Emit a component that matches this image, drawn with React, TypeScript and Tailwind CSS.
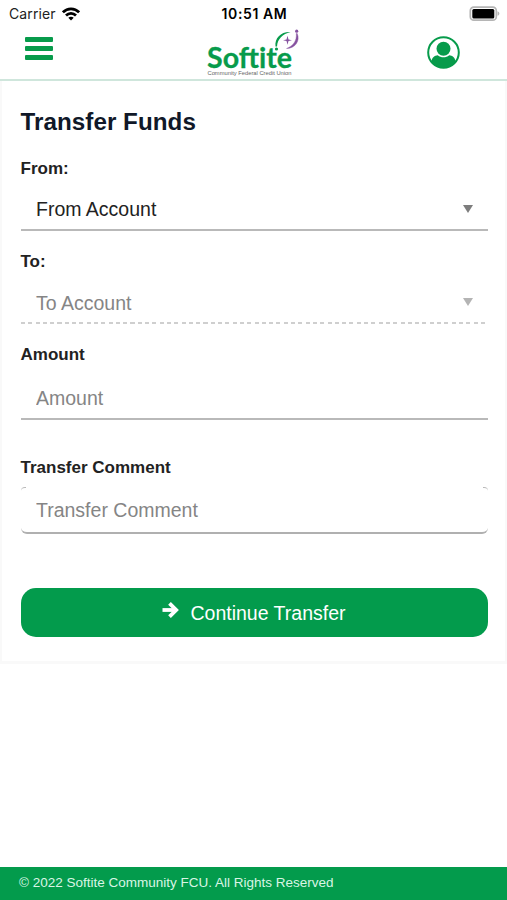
import React, { useState } from 'react';

const StatusBar = () => (
  <div className="grid grid-cols-3 items-center h-7 pb-px pl-[9px] pr-[7px] text-black font-['Inter',sans-serif]">
    <div className="flex items-center gap-[6px]">
      <span className="text-[14px] tracking-[0.1px] text-[#222]">Carrier</span>
      <svg width="18" height="14" viewBox="0 0 18 14" fill="none" stroke="#000" strokeWidth="2.7">
        <path d="M0.9 5.3C5.4 0.6 12.6 0.6 17.1 5.3" />
        <path d="M4 8.5C6.8 5.6 11.2 5.6 14 8.5" />
        <path d="M9 13.6L6.3 10.8C7.8 9.3 10.2 9.3 11.7 10.8Z" fill="#000" stroke="none" />
      </svg>
    </div>
    <span className="text-center text-[14px] font-semibold tracking-[0.6px]">10:51 AM</span>
    <svg className="justify-self-end" width="31" height="16" viewBox="0 0 31 16">
      <rect x="1.3" y="1.2" width="26" height="13" rx="3.5" fill="#fff" stroke="#b5b5b5" strokeWidth="1.7" />
      <rect x="3.3" y="3" width="22" height="9.4" rx="1.5" fill="#000" />
      <path d="M28.5 5.2C31 6.2 31 8.8 28.5 9.8Z" fill="#b5b5b5" />
    </svg>
  </div>
);

const Logo = () => (
  <svg width="100" height="51" viewBox="0 0 100 51">
    <text x="3" y="40" textLength="85" lengthAdjust="spacingAndGlyphs" fill="#079b4b" stroke="#079b4b" strokeWidth="0.3" fontFamily="Lato, sans-serif" fontWeight="700" fontSize="28.5">
      Softite
    </text>
    <text x="3.500" y="47.200" textLength="84" lengthAdjust="spacingAndGlyphs" fill="#666" fontFamily="Liberation Sans, sans-serif" fontSize="5">
      Community Federal Credit Union
    </text>
    <path d="M71.500 18.500C70.500 10 77 3.500 86.500 4C78.500 6 73.500 11 73 18.500Z" fill="#079b4b" />
    <path d="M93.200 5.500C96.500 13 91 20.500 82.500 20.500C89 18 93 13 92.300 5.500Z" fill="#8652a0" stroke="#8652a0" strokeWidth="0.4" />
    <circle cx="72.500" cy="21" r="1.600" fill="#079b4b" />
    <circle cx="92.700" cy="3.200" r="1.600" fill="#8652a0" />
    <path d="M83.500 7.800L84.500 11.500L88 12.300L84.500 13.100L83.500 16.800L82.500 13.100L79 12.300L82.500 11.500Z" fill="#8652a0" />
  </svg>
);

const Header = () => (
  <header className="flex items-start justify-between h-[53px] border-b-2 border-[#cfe6dc] pl-[25px] pr-[47px]">
    <button aria-label="Menu" className="mt-[9px] flex flex-col gap-1">
      <span className="h-[5px] w-7 rounded-[1px] bg-[#079b4b]" />
      <span className="h-[5px] w-7 rounded-[1px] bg-[#079b4b]" />
      <span className="h-[5px] w-7 rounded-[1px] bg-[#079b4b]" />
    </button>
    <div className="ml-[27px]">
      <Logo />
    </div>
    <button aria-label="Profile" className="mt-2">
      <svg width="33" height="33" viewBox="0 0 33 33">
        <circle cx="16.500" cy="16.500" r="15.300" fill="#fff" stroke="#079b4b" strokeWidth="2" />
        <circle cx="16.500" cy="12.800" r="7" fill="#079b4b" />
        <path d="M4.500 25.500C5 21.500 7.500 19.500 10.800 19.300C14 22 19 22 22.200 19.300C25.500 19.500 28 21.500 28.500 25.500C23 33.500 10 33.500 4.500 25.500Z" fill="#079b4b" />
      </svg>
    </button>
  </header>
);

const Caret = ({ className }: { className: string }) => (
  <svg className={className} width="10" height="8" viewBox="0 0 10 8" fill="currentColor">
    <path d="M0 0H10L5 8Z" />
  </svg>
);

const App = () => {
  const [amount, setAmount] = useState('');
  const [comment, setComment] = useState('');

  return (
    <div className="flex flex-col h-[900px] w-full bg-white font-['Liberation_Sans',Arial,sans-serif] text-[#222]">
      <StatusBar />
      <Header />
      <main className="flex-1">
        <div className="h-[583px] border-x-2 border-b-3 border-[#f9f9f9] pl-[18.5px] pr-[17.5px] pt-[25px]">
          <h1 className="h-8 text-[24.2px] leading-8 font-bold tracking-[0.05px] text-[#101828]">Transfer Funds</h1>

          <label className="mt-[21px] block h-5 text-[17px] leading-5 font-bold">From:</label>
          <button className="mt-[10px] flex h-[42px] w-full items-center justify-between border-b-2 border-[#b9b9b9] pt-[2px] pl-[15.5px] pr-[15px] text-[19.5px]">
            <span>From Account</span>
            <Caret className="text-[#7d7d7d] mb-[3px]" />
          </button>

          <label className="mt-[21px] block h-5 text-[17px] leading-5 font-bold">To:</label>
          <button disabled className="mt-[10px] flex h-[42px] w-full flex-col text-[19.5px] text-[#858585]">
            <span className="flex h-10 w-full items-center justify-between pt-[3px] pl-[15.5px] pr-[15px]">
              <span>To Account</span>
              <Caret className="text-[#b4b4b4] mb-[3px]" />
            </span>
            <span className="h-[2px] w-full bg-[repeating-linear-gradient(90deg,#cfcfcf_0_4px,transparent_4px_7.3px)]" />
          </button>

          <label className="mt-[21px] block h-5 text-[17px] leading-5 font-bold">Amount</label>
          <input
            value={amount}
            onChange={(e) => setAmount(e.target.value)}
            placeholder="Amount"
            className="mt-[11px] block h-11 w-full border-b-2 border-[#b9b9b9] pt-[2px] pl-[15.5px] text-[19.5px] outline-none placeholder:text-[#858585]"
          />

          <label className="mt-[38px] block h-5 text-[17px] leading-5 font-bold">Transfer Comment</label>
          <div className="relative mt-2">
            <input
              value={comment}
              onChange={(e) => setComment(e.target.value)}
              placeholder="Transfer Comment"
              className="block h-12 w-full rounded-[6px] border-b-2 border-[#b0b0b0] pt-[2px] pl-[15.5px] text-[19.5px] outline-none placeholder:text-[#858585]"
            />
            <span className="absolute left-0 top-px h-1 w-[5px] rounded-tl-[5px] border-t border-[#b9b9b9]" />
            <span className="absolute right-0 top-px h-1 w-[5px] rounded-tr-[5px] border-t border-[#b9b9b9]" />
          </div>

          <button className="mt-[54px] flex h-[49px] w-full items-center justify-center rounded-[15px] bg-[#039b4c] pt-[2px] text-[19.5px] text-white">
            <svg className="mr-[11px] mb-2" width="17" height="18" viewBox="0 0 17 18" fill="none" stroke="currentColor" strokeWidth="3.8">
              <path d="M0.500 9H14" />
              <path d="M7.500 2.300L14.200 9L7.500 15.700" />
            </svg>
            Continue Transfer
          </button>
        </div>
      </main>
      <footer className="h-[33px] bg-[#039b4c] pl-[19px] text-[13.5px] leading-[31px] text-[#d9f5e5]">
        © 2022 Softite Community FCU. All Rights Reserved
      </footer>
    </div>
  );
};

export default App;
